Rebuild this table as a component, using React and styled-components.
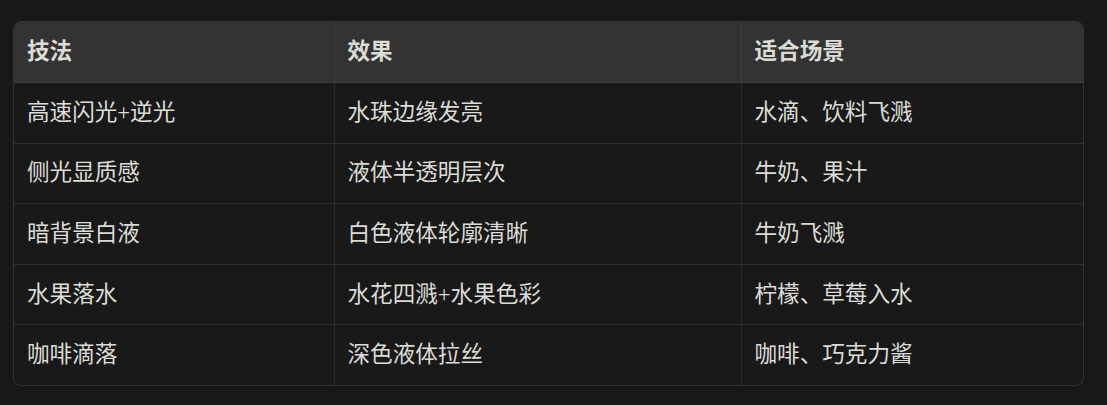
import React from "react";
import styled, { createGlobalStyle } from "styled-components";

const Global = createGlobalStyle`
  html, body { margin: 0; padding: 0; background: #181818; }
  body { font-family: "Liberation Serif", "Noto Sans CJK SC", serif; }
`;

const Page = styled.div`
  padding: 21px 23px 19px 13px;
`;

const Wrap = styled.div`
  border: 1px solid #333333;
  border-radius: 8px;
  overflow: hidden;
  background: #191919;
`;

const Table = styled.table`
  width: 100%;
  border-collapse: collapse;
  table-layout: fixed;
  color: #dcdcd6;
  font-size: 22.6px;
  line-height: 1.2;
`;

const Th = styled.th`
  background: #333333;
  font-weight: 700;
  text-align: left;
  height: 59px;
  padding: 0 13px 1px;
  border-left: ${(p) => (p.$first ? "none" : "1px solid #3d3d3d")};
  border-bottom: 1px solid #3d3d3d;
`;

const Td = styled.td`
  height: 58.6px;
  padding: 0 13px 1px;
  border-left: ${(p) => (p.$first ? "none" : "1px solid #2e2e2e")};
  border-top: 1px solid #2e2e2e;
`;

const headers = ["技法", "效果", "适合场景"];
const rows = [
  ["高速闪光+逆光", "水珠边缘发亮", "水滴、饮料飞溅"],
  ["侧光显质感", "液体半透明层次", "牛奶、果汁"],
  ["暗背景白液", "白色液体轮廓清晰", "牛奶飞溅"],
  ["水果落水", "水花四溅+水果色彩", "柠檬、草莓入水"],
  ["咖啡滴落", "深色液体拉丝", "咖啡、巧克力酱"],
];

export default function App() {
  return (
    <>
      <Global />
      <Page>
        <Wrap>
          <Table>
            <colgroup>
              <col style={{ width: 320 }} />
              <col style={{ width: 407 }} />
              <col />
            </colgroup>
            <thead>
              <tr>
                {headers.map((h, i) => (
                  <Th key={h} $first={i === 0}>{h}</Th>
                ))}
              </tr>
            </thead>
            <tbody>
              {rows.map((r, ri) => (
                <tr key={ri}>
                  {r.map((c, ci) => (
                    <Td key={ci} $first={ci === 0}>{c}</Td>
                  ))}
                </tr>
              ))}
            </tbody>
          </Table>
        </Wrap>
      </Page>
    </>
  );
}
